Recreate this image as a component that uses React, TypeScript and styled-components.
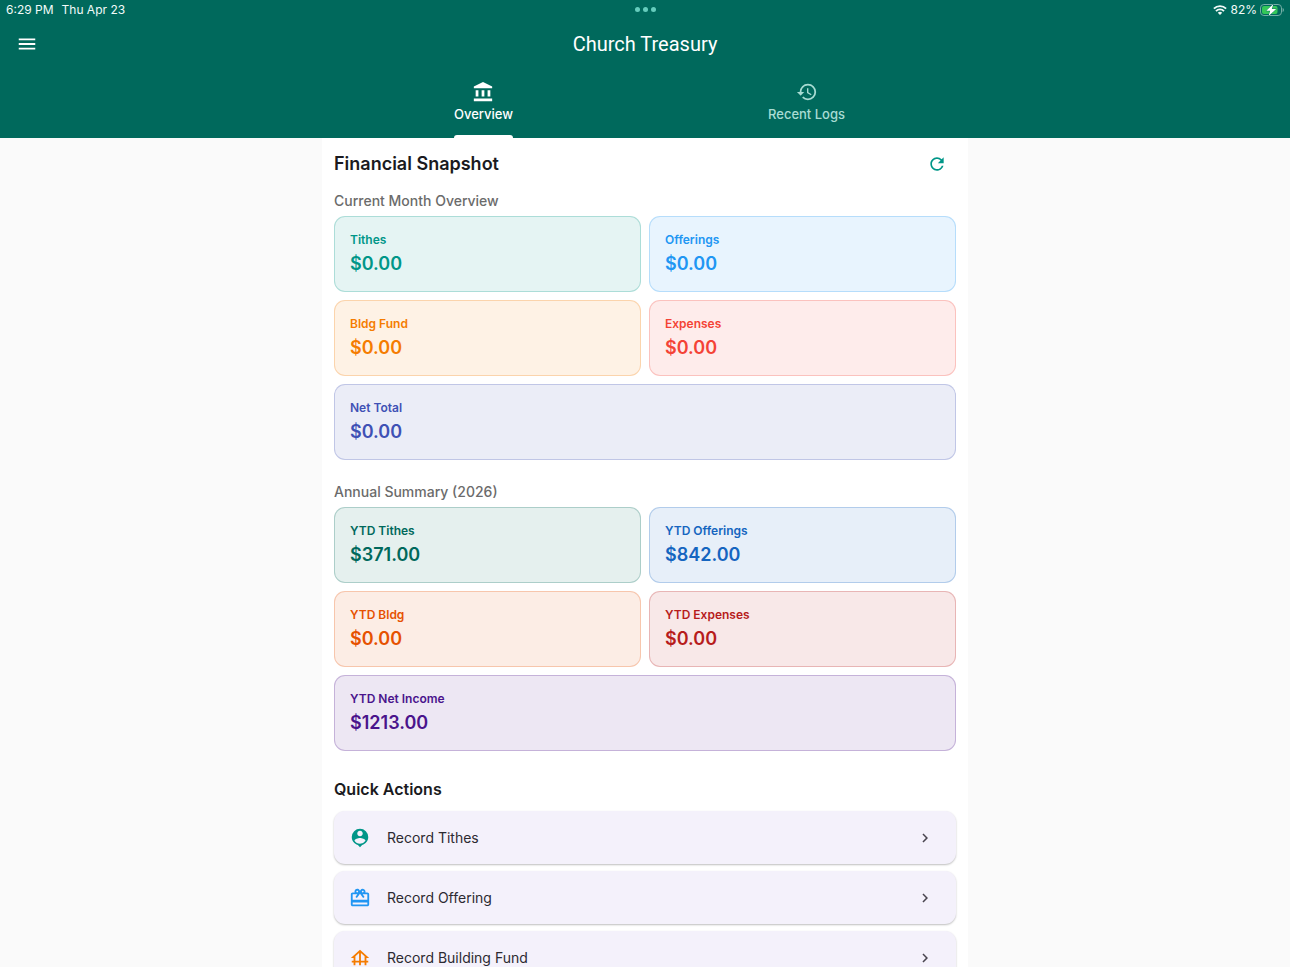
import React from 'react';
import styled, { createGlobalStyle } from 'styled-components';
import {
  MdAccountBalance,
  MdCardGiftcard,
  MdChevronRight,
  MdFoundation,
  MdHistory,
  MdMenu,
  MdPersonPin,
  MdRefresh,
} from 'react-icons/md';

const GlobalStyle = createGlobalStyle`
  *, *::before, *::after { box-sizing: border-box; }
  body {
    margin: 0;
    background: #fafafa;
    color: #1a1a20;
    font-family: Inter, "Liberation Sans", sans-serif;
  }
  button {
    margin: 0;
    padding: 0;
    border: 0;
    background: none;
    color: inherit;
    font: inherit;
    cursor: pointer;
  }
  h1, h2, h3, p, dl, dt, dd, ul { margin: 0; padding: 0; }
  svg { display: block; flex: none; }
`;

const Screen = styled.div`
  display: flex;
  flex-direction: column;
  height: 100vh;
  overflow: hidden;
`;

const Header = styled.header`
  flex: none;
  background: #00695c;
  color: #fff;
`;

const StatusBar = styled.div`
  display: grid;
  grid-template-columns: 1fr auto 1fr;
  align-items: center;
  height: 19px;
  padding: 0 6px;
  font-size: 12px;
  line-height: 19px;
  font-weight: 400;
  color: #f2fbf9;
`;

const StatusGroup = styled.div<{ $end?: boolean }>`
  display: flex;
  align-items: center;
  justify-content: ${(p) => (p.$end ? 'flex-end' : 'flex-start')};
  gap: ${(p) => (p.$end ? 3 : 8)}px;
`;

const Dots = styled.div`
  display: flex;
  gap: 3px;
`;

const Dot = styled.i`
  width: 5px;
  height: 5px;
  border-radius: 50%;
  background: #66cdbd;
`;

const AppBar = styled.div`
  display: grid;
  grid-template-columns: 1fr auto 1fr;
  align-items: center;
  height: 49px;
  padding: 0 16px;
`;

const IconButton = styled.button`
  display: flex;
  width: 22px;
  height: 22px;
  align-items: center;
  justify-content: center;
`;

const Title = styled.h1`
  font-family: Roboto, Inter, sans-serif;
  font-size: 20px;
  line-height: 24px;
  font-weight: 400;
`;

const Tabs = styled.nav`
  display: flex;
  width: 100%;
  max-width: 646px;
  height: 70px;
  margin: 0 auto;
`;

const Tab = styled.button<{ $active?: boolean }>`
  flex: 1;
  display: flex;
  justify-content: center;
  color: ${(p) => (p.$active ? '#fff' : '#a8dcd3')};
`;

const TabBody = styled.span<{ $active?: boolean }>`
  display: flex;
  flex-direction: column;
  align-items: center;
  gap: 2px;
  height: 70px;
  padding-top: 13px;
  font-size: 13px;
  line-height: 18px;
  font-weight: 500;

  &::after {
    content: '';
    align-self: stretch;
    height: 3px;
    margin-top: auto;
    border-radius: 3px 3px 0 0;
    background: ${(p) => (p.$active ? '#fff' : 'transparent')};
  }
`;

const Content = styled.main`
  flex: 1;
  min-height: 0;
  width: 100%;
  max-width: 646px;
  margin: 0 auto;
  padding: 11px 12px 24px;
  background: #fff;
  overflow-y: auto;
  scrollbar-width: none;
`;

const SectionHeader = styled.div`
  display: flex;
  align-items: center;
  justify-content: space-between;
  height: 30px;
  padding-right: 8px;
  color: #009688;
`;

const Heading = styled.h2<{ $small?: boolean }>`
  font-size: ${(p) => (p.$small ? 16 : 18)}px;
  line-height: 24px;
  font-weight: 600;
  color: #1a1a20;
`;

const Summary = styled.section`
  display: flex;
  flex-direction: column;
  gap: 6px;
  padding-top: 13px;

  & + & { padding-top: 23px; }
`;

const Subheading = styled.h3`
  font-size: 14px;
  line-height: 18px;
  font-weight: 500;
  color: #6b6b6b;
`;

const Cards = styled.dl`
  display: grid;
  grid-template-columns: 1fr 1fr;
  gap: 8px;
`;

const Card = styled.div<{ $rgb: string; $wide?: boolean }>`
  grid-column: ${(p) => (p.$wide ? '1 / -1' : 'auto')};
  display: flex;
  flex-direction: column;
  gap: 4px;
  height: 76px;
  padding: 15px;
  border: 1px solid rgba(${(p) => p.$rgb}, 0.25);
  border-radius: 11px;
  background: rgba(${(p) => p.$rgb}, 0.1);
  color: rgb(${(p) => p.$rgb});
`;

const CardLabel = styled.dt`
  font-size: 12px;
  line-height: 16px;
  font-weight: 600;
`;

const CardValue = styled.dd`
  font-size: 18px;
  line-height: 24px;
  font-weight: 600;
`;

const Actions = styled.section`
  display: flex;
  flex-direction: column;
  gap: 10px;
  padding-top: 26px;
`;

const ActionList = styled.ul`
  display: flex;
  flex-direction: column;
  gap: 7px;
  list-style: none;
`;

const Action = styled.button`
  display: flex;
  align-items: center;
  gap: 16px;
  width: 100%;
  height: 53px;
  padding: 0 22px 0 15px;
  border-radius: 11px;
  background: #f4f1fb;
  box-shadow: 0 1px 2px rgba(0, 0, 0, 0.26);
  color: #49454f;
`;

const ActionIcon = styled.span<{ $color: string }>`
  color: ${(p) => p.$color};
`;

const ActionLabel = styled.span`
  flex: 1;
  text-align: left;
  font-size: 14px;
  line-height: 20px;
  color: #2c2a31;
`;

interface Stat {
  label: string;
  value: string;
  rgb: string;
  wide?: boolean;
}

const month: Stat[] = [
  { label: 'Tithes', value: '$0.00', rgb: '0, 150, 136' },
  { label: 'Offerings', value: '$0.00', rgb: '33, 150, 243' },
  { label: 'Bldg Fund', value: '$0.00', rgb: '245, 124, 0' },
  { label: 'Expenses', value: '$0.00', rgb: '244, 67, 54' },
  { label: 'Net Total', value: '$0.00', rgb: '63, 81, 181', wide: true },
];

const year: Stat[] = [
  { label: 'YTD Tithes', value: '$371.00', rgb: '0, 105, 92' },
  { label: 'YTD Offerings', value: '$842.00', rgb: '21, 101, 192' },
  { label: 'YTD Bldg', value: '$0.00', rgb: '230, 81, 0' },
  { label: 'YTD Expenses', value: '$0.00', rgb: '183, 28, 28' },
  { label: 'YTD Net Income', value: '$1213.00', rgb: '74, 20, 140', wide: true },
];

const actions = [
  { label: 'Record Tithes', color: '#009688', Icon: MdPersonPin },
  { label: 'Record Offering', color: '#2196f3', Icon: MdCardGiftcard },
  { label: 'Record Building Fund', color: '#f57c00', Icon: MdFoundation },
];

function StatSection({ title, stats }: { title: string; stats: Stat[] }) {
  return (
    <Summary>
      <Subheading>{title}</Subheading>
      <Cards>
        {stats.map((s) => (
          <Card key={s.label} $rgb={s.rgb} $wide={s.wide}>
            <CardLabel>{s.label}</CardLabel>
            <CardValue>{s.value}</CardValue>
          </Card>
        ))}
      </Cards>
    </Summary>
  );
}

function WifiIcon() {
  return (
    <svg width="14" height="10" viewBox="0 0 14 10" fill="none" stroke="#f2fbf9" strokeWidth="1.9">
      <path d="M0.9 3.7a8.6 8.6 0 0 1 12.2 0" />
      <path d="M3 6.1a5.6 5.6 0 0 1 8 0" />
      <path d="M7 10 4.8 7.8a3.1 3.1 0 0 1 4.4 0z" fill="#f2fbf9" stroke="none" />
    </svg>
  );
}

function BatteryIcon() {
  return (
    <svg width="24" height="12" viewBox="0 0 24 12">
      <rect x="0.5" y="0.5" width="21" height="11" rx="3.4" fill="none" stroke="#74aea6" />
      <rect x="2" y="2" width="15.5" height="8" rx="2" fill="#34c759" />
      <path d="M22.6 4v4c.8-.3 1.3-1.1 1.3-2s-.5-1.7-1.3-2z" fill="#74aea6" />
      <path
        d="M13.4 0 6.2 6.8h4L8.6 12l7.6-7h-4.4z"
        fill="#fff"
        stroke="#00695c"
        strokeWidth="0.8"
        paintOrder="stroke"
      />
    </svg>
  );
}

export default function App() {
  return (
    <Screen>
      <GlobalStyle />
      <Header>
        <StatusBar>
          <StatusGroup>
            <span>6:29 PM</span>
            <span>Thu Apr 23</span>
          </StatusGroup>
          <Dots>
            <Dot />
            <Dot />
            <Dot />
          </Dots>
          <StatusGroup $end>
            <WifiIcon />
            <span>82%</span>
            <BatteryIcon />
          </StatusGroup>
        </StatusBar>
        <AppBar>
          <IconButton aria-label="Open menu">
            <MdMenu size={22} />
          </IconButton>
          <Title>Church Treasury</Title>
        </AppBar>
        <Tabs>
          <Tab $active>
            <TabBody $active>
              <MdAccountBalance size={22} />
              Overview
            </TabBody>
          </Tab>
          <Tab>
            <TabBody>
              <MdHistory size={22} />
              Recent Logs
            </TabBody>
          </Tab>
        </Tabs>
      </Header>
      <Content>
        <SectionHeader>
          <Heading>Financial Snapshot</Heading>
          <IconButton aria-label="Refresh">
            <MdRefresh size={20} />
          </IconButton>
        </SectionHeader>
        <StatSection title="Current Month Overview" stats={month} />
        <StatSection title="Annual Summary (2026)" stats={year} />
        <Actions>
          <Heading $small>Quick Actions</Heading>
          <ActionList>
            {actions.map(({ label, color, Icon }) => (
              <li key={label}>
                <Action>
                  <ActionIcon $color={color}>
                    <Icon size={22} />
                  </ActionIcon>
                  <ActionLabel>{label}</ActionLabel>
                  <MdChevronRight size={18} />
                </Action>
              </li>
            ))}
          </ActionList>
        </Actions>
      </Content>
    </Screen>
  );
}
